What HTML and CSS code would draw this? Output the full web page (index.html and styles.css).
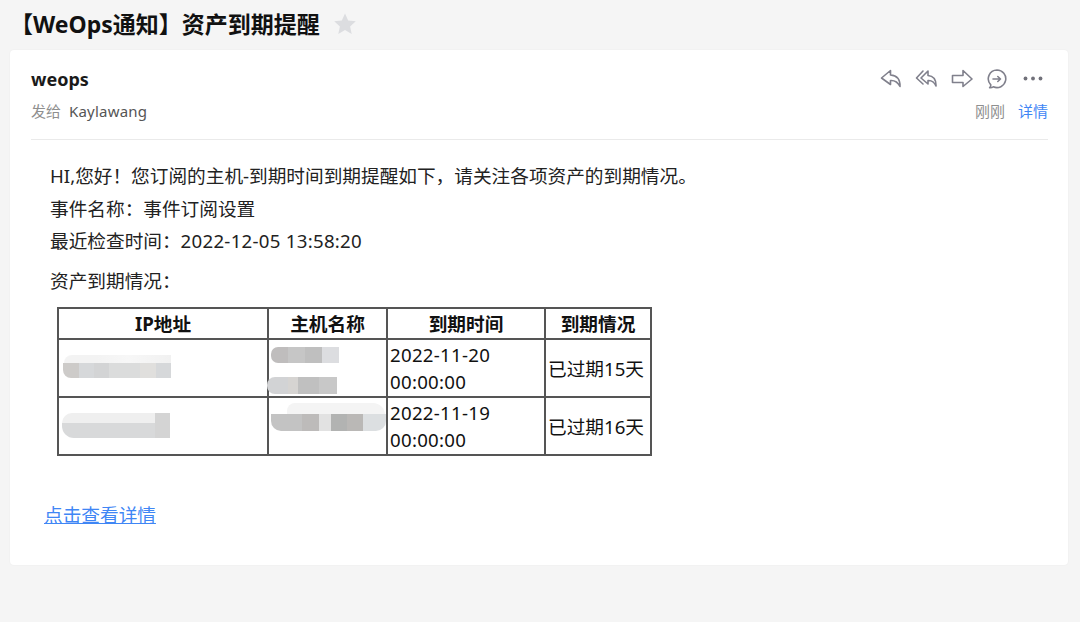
FILE: index.html
```html
<!DOCTYPE html>
<html lang="zh">
<head>
<meta charset="utf-8">
<title>【WeOps通知】资产到期提醒</title>
<link rel="stylesheet" href="styles.css">
</head>
<body>
<div class="title-row">
  <h1 class="title">【WeOps通知】资产到期提醒</h1>
  <svg class="star" viewBox="0 0 24 24" width="24" height="24"><path d="M12 1.500l3.200 7 7.600.8-5.700 5.100 1.600 7.500L12 18.100l-6.700 3.800 1.600-7.500L1.200 9.300l7.600-.8z" fill="#dcdde0"/></svg>
</div>
<main class="card">
  <header class="head">
    <div class="head-row top">
      <div class="sender">weops</div>
      <div class="icons">
        <svg viewBox="0 0 22 20" width="22" height="20"><path d="M10.500 1.500L1.500 9l9 6.500v-4c4-.3 7 1 9.500 6 .3-7-3-11-9.500-11.500z" class="ic"/></svg>
        <svg viewBox="0 0 22 20" width="22" height="20"><path d="M13 2L6 9l7 6v-3.500c3.500-.3 6 1 8 5.500.2-6-2.500-10-8-10.500z" class="ic"/><path d="M8 2L1.500 9 8 15" class="ic"/></svg>
        <svg viewBox="0 0 22 20" width="22" height="20"><path d="M12 1.500l9 8.500-9 7.500v-4H1.500v-7H12z" class="ic"/></svg>
        <svg viewBox="0 0 22 20" width="22" height="20"><path d="M11 1a8.800 8.800 0 1 1-3.700 16.800c-1 .7-2.300 1-3.700.9.800-.8 1.200-1.700 1.200-2.800A8.800 8.800 0 0 1 11 1z" class="ic"/><path d="M7 10h7.500M11.800 7.500L14.500 10l-2.700 2.500" class="ic"/></svg>
        <svg viewBox="0 0 22 20" width="22" height="20"><circle cx="3.500" cy="9.500" r="1.900" class="dot"/><circle cx="11" cy="9.500" r="1.900" class="dot"/><circle cx="18.500" cy="9.500" r="1.900" class="dot"/></svg>
      </div>
    </div>
    <div class="head-row meta">
      <div class="to"><span class="muted">发给</span><span class="name">Kaylawang</span></div>
      <div class="when"><span class="muted">刚刚</span><a class="link" href="#">详情</a></div>
    </div>
  </header>
  <section class="body">
    <p class="line">HI,您好！您订阅的主机-到期时间到期提醒如下，请关注各项资产的到期情况。</p>
    <p class="line">事件名称：事件订阅设置</p>
    <p class="line">最近检查时间：<span class="num">2022-12-05 13:58:20</span></p>
    <p class="line sub">资产到期情况：</p>
    <table class="assets">
      <thead>
        <tr><th class="c1">IP地址</th><th class="c2">主机名称</th><th class="c3">到期时间</th><th class="c4">到期情况</th></tr>
      </thead>
      <tbody>
        <tr>
          <td><div class="blur b-ip1t"></div><div class="blur b-ip1"></div></td>
          <td><div class="blur b-h1a"></div><div class="blur b-h1b"></div></td>
          <td><span class="num">2022-11-20 00:00:00</span></td>
          <td class="status">已过期15天</td>
        </tr>
        <tr>
          <td><div class="blur b-ip2"></div></td>
          <td><div class="blur b-h2t"></div><div class="blur b-h2"></div></td>
          <td><span class="num">2022-11-19 00:00:00</span></td>
          <td class="status">已过期16天</td>
        </tr>
      </tbody>
    </table>
    <a class="detail" href="#">点击查看详情</a>
  </section>
</main>
</body>
</html>
```
FILE: styles.css
```css
* { box-sizing: border-box; }
html, body { margin: 0; height: 100%; }
body {
  background: #f5f5f5;
  color: #1a1a1a;
  font-family: "Noto Sans", "Noto Sans CJK SC", sans-serif;
  padding: 0 12px 0 10px;
  overflow: hidden;
}
.title-row { display: flex; align-items: center; height: 50px; gap: 13px; }
.title { margin: -2px 0 0; font-size: 23px; font-weight: 700; line-height: 50px; color: #111; }
.star { flex: none; margin-top: -3px; }
.card {
  height: 515px;
  background: #fff;
  border-radius: 4px;
  box-shadow: 0 0 2px rgba(0,0,0,.06);
  padding: 0 20px 0 21px;
}
.head { height: 90px; border-bottom: 1px solid #eaeaea; }
.head-row { display: flex; justify-content: space-between; align-items: center; }
.top { height: 58px; }
.sender { font-size: 18px; font-weight: 700; color: #1a1a1a; }
.icons { display: flex; gap: 13.500px; margin-right: 4.500px; }
.ic { fill: none; stroke: #80808c; stroke-width: 1.600; stroke-linejoin: round; stroke-linecap: round; }
.dot { fill: #71717a; }
.meta { height: 20px; margin-top: -8px; font-size: 15px; }
.muted { color: #8f8f8f; }
.name { color: #555; margin-left: 8px; letter-spacing: .2px; }
.when { display: flex; gap: 13px; }
.link { color: #3f86f5; text-decoration: none; }
.body { padding: 20px 0 0 19px; }
.line { margin: 0; font-size: 18.670px; line-height: 32.500px; color: #222; }
.num { letter-spacing: .27px; }
.sub { margin-top: 7px; }
.assets {
  margin: 10px 0 0 7px;
  border-collapse: collapse;
  border: 2px solid #555;
  table-layout: fixed;
  width: 593px;
  font-size: 18.670px;
  color: #111;
}
.assets th, .assets td { border: 2px solid #555; padding: 0 2px; }
.assets th { height: 31px; font-weight: 700; text-align: center; line-height: 26px; padding-top: 1px; }
.assets td { height: 58px; line-height: 27px; position: relative; }
.c1 { width: 210px; }
.c2 { width: 119px; }
.c3 { width: 158px; }
.c4 { width: 106px; }
.status { white-space: nowrap; }
.blur { position: absolute; filter: blur(.4px); }
.b-ip1t { left: 5px; top: 15px; width: 107px; height: 9px; border-radius: 8px 0 0 0; background: linear-gradient(90deg, #f3f3f3 30%, #f7f7f7 60%, #f1f1f1); }
.b-ip1 { left: 4px; top: 23px; width: 108px; height: 15px; border-radius: 0 0 0 8px;
  background: linear-gradient(90deg, #cdcbc9 0 15%, #d6d8da 15% 29%, #d3d4d5 29% 43%, #dbdcdc 43% 71%, #e0dfdd 71% 86%, #d6d8da 86%); }
.b-ip2 { left: 3px; top: 15px; width: 108px; height: 25px; border-radius: 10px 0 0 12px;
  background: linear-gradient(90deg, transparent 0 86%, #d4d4d4 86%) 0 0 / 100% 100%, linear-gradient(180deg, #efefef 0 42%, #d8d9da 42%); }
.b-h1a { left: 2px; top: 7px; width: 68px; height: 16px; border-radius: 7px 0 0 7px;
  background: linear-gradient(90deg, #bfbdbd 0 25%, #c6c6c6 25% 50%, #bfbfbf 50% 75%, #dcdde0 75%); }
.b-h1b { left: -2px; top: 37px; width: 70px; height: 17px; border-radius: 8px 0 0 8px;
  background: linear-gradient(90deg, #d2d3d5 0 30%, #d6d4d2 30% 45%, #c0c0c0 45% 75%, #c8c8c8 75%); }
.b-h2t { left: 18px; top: 5px; width: 98px; height: 16px; border-radius: 8px 12px 0 0; background: #f4f4f4; }
.b-h2 { left: 2px; top: 16px; width: 115px; height: 17px; border-radius: 0 0 10px 10px;
  background: linear-gradient(90deg, #c3c3c3 0 27%, #bdbbba 27% 42%, #e2e2e2 42% 52%, #b2b3b2 52% 66%, #bab8b6 66% 80%, #dcdfe1 80%); }
.detail { display: inline-block; margin: 46px 0 0 -6px; font-size: 18.670px; line-height: 26px; color: #3f86f5; text-decoration: underline; }
```
